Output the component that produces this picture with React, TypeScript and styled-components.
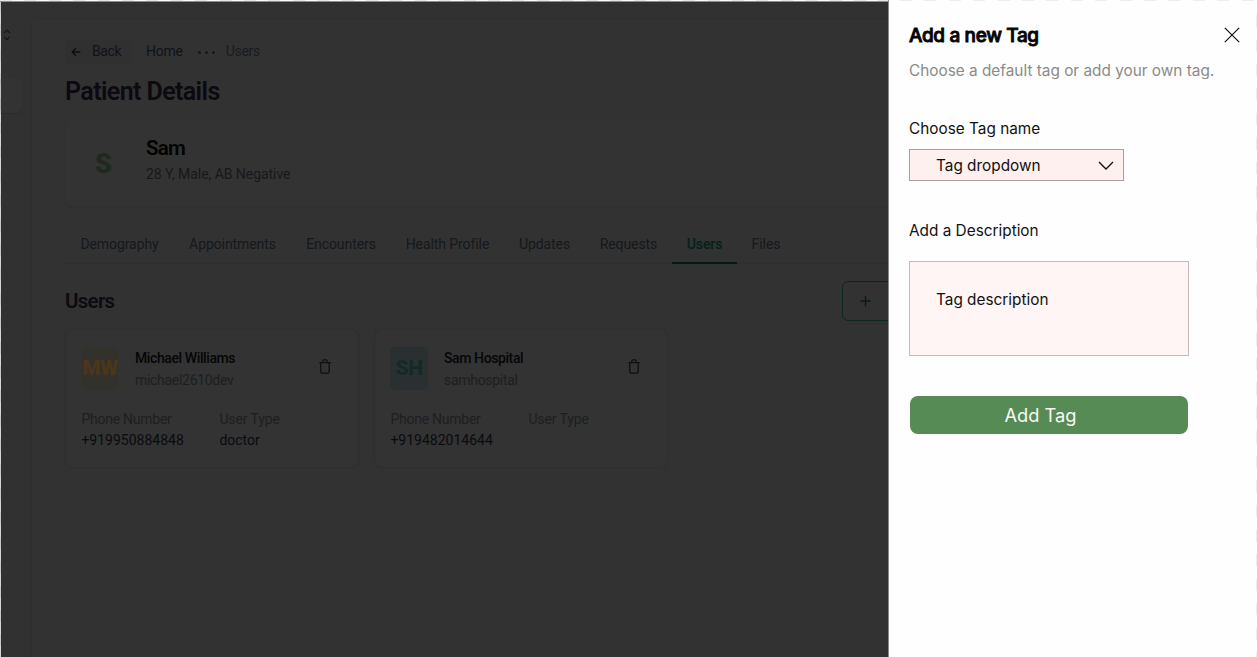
import React from "react";
import styled, { createGlobalStyle } from "styled-components";

const GlobalStyle = createGlobalStyle`
  * { box-sizing: border-box; }
  body { margin: 0; background: #fefefe; font-family: Roboto, "Liberation Sans", sans-serif; }
  h1, h2, h3, p { margin: 0; }
  button { font: inherit; margin: 0; padding: 0; background: none; border: 0; }
  svg { display: block; flex: none; }
`;

const Screen = styled.div`
  display: flex;
  width: 1257px;
  height: 657px;
  overflow: hidden;
`;

const Backdrop = styled.div`
  display: flex;
  width: 889px;
  flex: none;
  overflow: hidden;
  padding: 2px 0 0 1px;
  border-right: 1px solid #8a8a8a;
  background:
    repeating-linear-gradient(90deg, #e4e6e6 0 12px, #fbfbfb 12px 24.4px) 0 0 / 100% 1px no-repeat,
    linear-gradient(#8c8f8f, #8c8f8f) 0 1px / 100% 1px no-repeat,
    repeating-linear-gradient(180deg, #c3c8c8 0 12px, #d2d5d5 12px 24.4px) 0 0 / 1px 100% no-repeat,
    #313131;
`;

const Sidebar = styled.aside`
  width: 30px;
  flex: none;
  padding-top: 27px;
`;

const SidebarItem = styled.div`
  width: 21px;
  height: 35px;
  margin-top: 37px;
  background: #333333;
  border-radius: 0 6px 6px 0;
  box-shadow: 0 1px 1px #2d2d2d;
`;

const Panel = styled.main`
  width: 900px;
  flex: none;
  height: 660px;
  margin-top: 16px;
  padding: 20px 0 0 33px;
  background: #323232;
  border: 1px solid #2f2f2f;
  border-radius: 7px 0 0 0;
`;

const Breadcrumbs = styled.nav`
  display: flex;
  align-items: center;
  height: 25px;
`;

const BackButton = styled.button`
  display: flex;
  align-items: center;
  gap: 11px;
  width: 67px;
  height: 25px;
  padding-left: 6px;
  margin-right: 14px;
  background: #303030;
  border-radius: 4px;
`;

const Copy = styled.span<{ $size?: number; $color?: string; $weight?: number; $track?: number; $line?: number }>`
  display: block;
  white-space: nowrap;
  font-size: ${(p) => p.$size ?? 14}px;
  line-height: ${(p) => p.$line ?? 21}px;
  color: ${(p) => p.$color ?? "#101318"};
  font-weight: ${(p) => p.$weight ?? 400};
  letter-spacing: ${(p) => p.$track ?? 0}px;
`;

const Dots = styled.div`
  display: flex;
  gap: 4px;
  margin: 1px 11px 0 15px;
  i { width: 3px; height: 3px; border-radius: 50%; background: #16191d; }
`;

const PageTitle = styled.h1`
  margin-top: 12px;
  font-size: 25px;
  line-height: 32px;
  font-weight: 600;
  letter-spacing: -0.6px;
  color: #0c0910;
`;

const PatientCard = styled.section`
  display: flex;
  height: 87px;
  margin-top: 11px;
  border-radius: 7px;
  background: #333333;
  box-shadow: 0 1px 1px #2e2e2e;
`;

const PatientInitial = styled.div`
  width: 81px;
  padding: 2px 4px 0 0;
  text-align: center;
  color: #1d2a1d;
  font: 900 27px/87px Roboto, sans-serif;
`;

const PatientInfo = styled.div`
  padding-top: 15px;
`;

const Tabs = styled.div`
  display: flex;
  height: 43px;
  margin-top: 15px;
  border-bottom: 1px solid #2f2f2f;
`;

const Tab = styled.div<{ $width: number; $active?: boolean }>`
  width: ${(p) => p.$width}px;
  flex: none;
  height: 43px;
  padding-top: 13px;
  display: flex;
  justify-content: center;
  border-bottom: 2px solid ${(p) => (p.$active ? "#021b14" : "transparent")};
`;

const UsersHeader = styled.div`
  display: flex;
  align-items: center;
  justify-content: space-between;
  height: 40px;
  margin-top: 17px;
  width: 871px;
`;

const AddUserButton = styled.button`
  display: flex;
  align-items: center;
  width: 94px;
  height: 40px;
  padding-left: 17px;
  border: 1.5px solid #0d2621;
  border-radius: 6px;
`;

const UserCards = styled.div`
  display: flex;
  gap: 17px;
  margin-top: 9px;
`;

const UserCard = styled.article`
  width: 292px;
  height: 137px;
  padding: 18px 16px 0 15px;
  margin-left: 1px;
  margin-right: -1px;
  background: #333333;
  border-radius: 7px;
  box-shadow: 0 0 2px #2a2a2a;
`;

const UserHeader = styled.header`
  display: flex;
`;

const Avatar = styled.div<{ $bg: string; $fg: string }>`
  display: flex;
  justify-content: center;
  width: 38px;
  height: 43px;
  margin: -1px 16px 0 0;
  border-radius: 5px;
  background: ${(p) => p.$bg};
  color: ${(p) => p.$fg};
  font: 900 21px/43px Roboto, sans-serif;
  letter-spacing: -0.5px;
`;

const UserNames = styled.div`
  flex: 1;
`;

const TrashSlot = styled.div`
  padding: 11px 11px 0 0;
`;

const Facts = styled.div`
  display: flex;
  margin: 18px 0 0 0.4px;
`;

const Fact = styled.div`
  width: 138px;
  flex: none;
`;

const Drawer = styled.aside`
  flex: 1;
  padding: 20px 0 0 20px;
  font-family: Inter, "Liberation Sans", sans-serif;
  background:
    repeating-linear-gradient(90deg, #eeeeee 0 12px, transparent 12px 24.4px) 11px 0 / 100% 1px no-repeat,
    repeating-linear-gradient(180deg, #eeeeee 0 12px, transparent 12px 24.5px) 100% 15px / 1px 100% no-repeat,
    #fefefe;
`;

const DrawerHeader = styled.header`
  display: flex;
  justify-content: space-between;
  align-items: center;
  height: 30px;
  padding-right: 17.5px;
`;

const DrawerTitle = styled.h2`
  padding-top: 2px;
  font-size: 19px;
  line-height: 30px;
  font-weight: 500;
  letter-spacing: -0.36px;
  color: #050505;
  -webkit-text-stroke: 0.9px #050505;
`;

const Hint = styled.p`
  margin-top: 9px;
  font-size: 15.35px;
  line-height: 24px;
  color: #8a8a8a;
`;

const Label = styled.p<{ $top: number }>`
  margin-top: ${(p) => p.$top}px;
  font-size: 15.35px;
  line-height: 24px;
  color: #111;
`;

const Select = styled.div`
  display: flex;
  align-items: center;
  justify-content: space-between;
  width: 215px;
  height: 32px;
  margin-top: 8px;
  padding: 0 9px 0 26px;
  font-size: 15.35px;
  color: #111;
  background: #fff0f0;
  border: 1px solid #a99da0;
`;

const Description = styled.div`
  width: 280px;
  height: 95px;
  margin-top: 18px;
  padding: 26px 0 0 26px;
  font-size: 15.35px;
  line-height: 24px;
  color: #111;
  background: #fff5f4;
  border: 1px solid #c3bcbe;
`;

const SubmitButton = styled.button`
  display: block;
  width: 278px;
  height: 38px;
  margin: 40px 0 0 1px;
  padding-right: 17px;
  border-radius: 8px;
  background: #568b55;
  color: #f7faf7;
  font-size: 18.3px;
`;

const TrashIcon = () => (
  <svg width="12" height="15" viewBox="0 0 12 15" fill="none" stroke="#0d1015" strokeWidth="1.3" strokeLinecap="round" strokeLinejoin="round">
    <path d="M.8 3.7h10.4M1.8 3.7v9.1c0 .8.5 1.3 1.3 1.3h5.8c.8 0 1.3-.5 1.3-1.3V3.7M3.8 3.5V2.2C3.8 1.3 4.5.8 5.2.8h1.6c.7 0 1.4.5 1.4 1.4v1.3" />
  </svg>
);

const tabs = [
  { name: "Demography", width: 109 },
  { name: "Appointments", width: 117 },
  { name: "Encounters", width: 100 },
  { name: "Health Profile", width: 113 },
  { name: "Updates", width: 81 },
  { name: "Requests", width: 87 },
  { name: "Users", width: 65 },
  { name: "Files", width: 58 },
];

const users = [
  { initials: "MW", name: "Michael Williams", login: "michael2610dev", phone: "+919950884848", type: "doctor", bg: "#33312b", fg: "#49361b" },
  { initials: "SH", name: "Sam Hospital", login: "samhospital", phone: "+919482014644", type: "", bg: "#2a3031", fg: "#152a26" },
];

export default function App() {
  return (
    <>
      <GlobalStyle />
      <Screen>
        <Backdrop>
          <Sidebar>
            <svg width="11" height="12" viewBox="0 0 11 12" fill="none" stroke="#111418" strokeWidth="1.1" strokeLinecap="round" strokeLinejoin="round">
              <path d="M3.5 3.6 6 1.2l2.5 2.4M3.5 8.1 6 10.5l2.5-2.4" />
            </svg>
            <SidebarItem />
          </Sidebar>
          <Panel>
            <Breadcrumbs>
              <BackButton>
                <svg width="10" height="10" viewBox="0 0 10 10" fill="none" stroke="#0b0e12" strokeWidth="1.3" strokeLinecap="round" strokeLinejoin="round">
                  <path d="M8.8 5H1.4M4.6 1.5 1.2 5l3.4 3.5" />
                </svg>
                <Copy $track={-0.4} $line={23}>Back</Copy>
              </BackButton>
              <Copy $track={-0.25} $line={23}>Home</Copy>
              <Dots><i /><i /><i /></Dots>
              <Copy $color="#181b1f" $track={-0.3} $line={23}>Users</Copy>
            </Breadcrumbs>
            <PageTitle>Patient Details</PageTitle>
            <PatientCard>
              <PatientInitial>S</PatientInitial>
              <PatientInfo>
                <Copy $size={20.5} $weight={600} $line={28} $track={-0.8} $color="#020202">Sam</Copy>
                <Copy $color="#17191c" $line={25} $track={-0.05}>28 Y, Male, AB Negative</Copy>
              </PatientInfo>
            </PatientCard>
            <Tabs>
              {tabs.map((t) => (
                <Tab key={t.name} $width={t.width} $active={t.name === "Users"}>
                  <Copy $track={-0.08} $color={t.name === "Users" ? "#03211a" : "#15181d"} $weight={t.name === "Users" ? 500 : 400}>{t.name}</Copy>
                </Tab>
              ))}
            </Tabs>
            <UsersHeader>
              <Copy $size={20.5} $weight={600} $track={-0.7} $color="#0c0b11">Users</Copy>
              <AddUserButton>
                <svg width="11" height="12" viewBox="0 0 11 12" stroke="#081a16" strokeWidth="1.3">
                  <path d="M.5 6h10M5.5.7v10.6" />
                </svg>
              </AddUserButton>
            </UsersHeader>
            <UserCards>
              {users.map((u) => (
                <UserCard key={u.initials}>
                  <UserHeader>
                    <Avatar $bg={u.bg} $fg={u.fg}>{u.initials}</Avatar>
                    <UserNames>
                      <Copy $color="#050608" $weight={500} $track={-0.4}>{u.name}</Copy>
                      <Copy $color="#1c1f22" $track={-0.3} $line={22}>{u.login}</Copy>
                    </UserNames>
                    <TrashSlot><TrashIcon /></TrashSlot>
                  </UserHeader>
                  <Facts>
                    <Fact>
                      <Copy $color="#1d1f22" $track={-0.25}>Phone Number</Copy>
                      <Copy $color="#0a0b10">{u.phone}</Copy>
                    </Fact>
                    <Fact>
                      <Copy $color="#1d1f22" $track={-0.1}>User Type</Copy>
                      <Copy $color="#0a0b10">{u.type}</Copy>
                    </Fact>
                  </Facts>
                </UserCard>
              ))}
            </UserCards>
          </Panel>
        </Backdrop>
        <Drawer>
          <DrawerHeader>
            <DrawerTitle>Add a new Tag</DrawerTitle>
            <svg width="16" height="16" viewBox="0 0 16 16" stroke="#111" strokeWidth="1.2">
              <path d="M.8.8l14.4 14.4M15.2.8.8 15.2" />
            </svg>
          </DrawerHeader>
          <Hint>Choose a default tag or add your own tag.</Hint>
          <Label $top={34}>Choose Tag name</Label>
          <Select>
            Tag dropdown
            <svg width="16" height="9" viewBox="0 0 16 9" fill="none" stroke="#111" strokeWidth="1.4">
              <path d="M1 1l7 7 7-7" />
            </svg>
          </Select>
          <Label $top={38}>Add a Description</Label>
          <Description>Tag description</Description>
          <SubmitButton>Add Tag</SubmitButton>
        </Drawer>
      </Screen>
    </>
  );
}
